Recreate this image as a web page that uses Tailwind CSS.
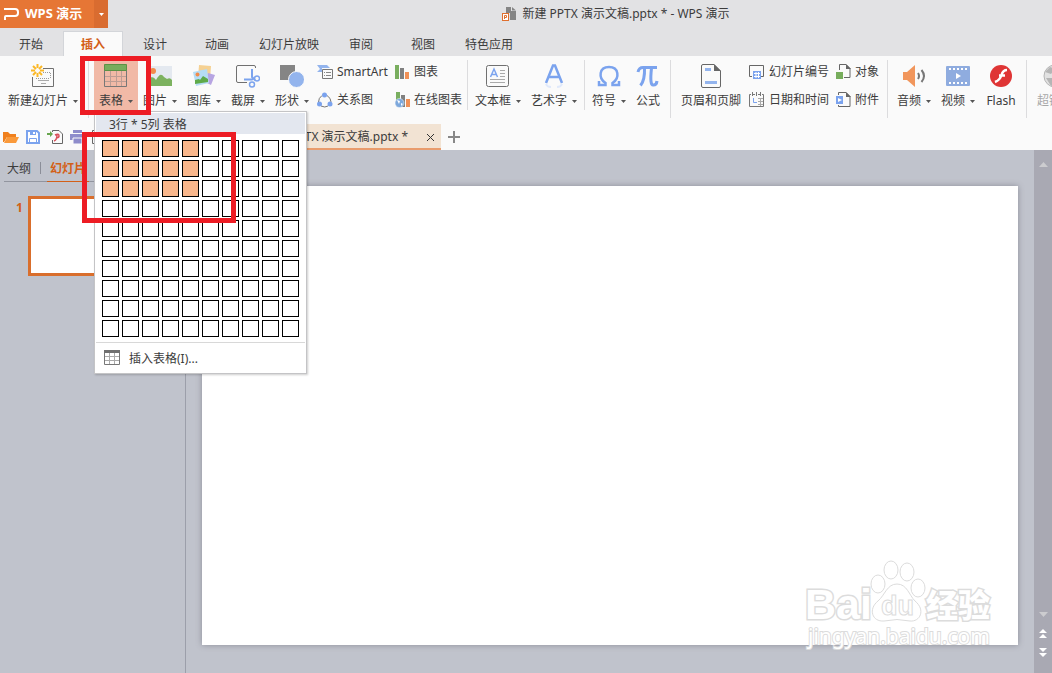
<!DOCTYPE html>
<html lang="zh-CN">
<head>
  <meta charset="UTF-8" />
  <meta name="viewport" content="width=device-width, initial-scale=1.0" />
  <title>新建 PPTX 演示文稿.pptx * - WPS 演示</title>
  <script src="https://cdn.jsdelivr.net/npm/@tailwindcss/browser@4"></script>
  <style>
    body {
      font-family: 'Noto Sans', 'Noto Sans CJK SC', sans-serif;
    }
  </style>
</head>
<body class="relative h-screen flex flex-col overflow-hidden bg-[#fafafa] text-xs text-[#3c3c3c]">

  <!-- Title bar -->
  <header class="flex h-7 shrink-0 bg-[#e2e2e4]">
    <button class="flex items-center gap-1.5 w-[94px] pl-1 bg-[#e67635] text-[13px] text-white font-bold whitespace-nowrap">
      <svg class="shrink-0" width="15" height="14" fill="none" stroke="#fff" stroke-width="2"><path d="M0 2h11q3 0 3 3v1q0 3-3 3H2q-1 0-1 1v3" /></svg>
      <span>WPS 演示</span>
    </button>
    <button class="flex items-center justify-center w-3.5 bg-[#d96c30]" aria-label="菜单">
      <svg width="5" height="3" fill="#fff"><path d="M0 0h5L2.500 3z" /></svg>
    </button>
    <div class="flex flex-1 items-center justify-center gap-1.5 pl-[72px]">
      <svg width="14" height="14"><path d="M4 0h5v4h5v9H8V6H4z" fill="#858585" /><path d="M10 0l4 3.500h-4z" fill="#858585" /><rect x=".5" y="6.500" width="6" height="7" fill="#fff" stroke="#e0702f" /><path d="M2.500 12V8.500h2v2h-2" fill="none" stroke="#e0702f" /></svg>
      <h1>新建 PPTX 演示文稿.pptx * - WPS 演示</h1>
    </div>
  </header>

  <!-- Ribbon tabs -->
  <nav class="flex h-7 shrink-0 items-end bg-[#e2e2e4] whitespace-nowrap *:h-[25px] *:pt-0.5">
    <button class="mx-0.5 px-[17px]">开始</button>
    <button class="mx-px px-[17px] border border-b-0 border-[#d3d5d9] bg-[#fafafa] font-bold text-[#d35f17]">插入</button>
    <button class="mx-0.5 px-[17px]">设计</button>
    <button class="mx-0.5 px-[17px]">动画</button>
    <button class="mx-0.5 px-[9px]">幻灯片放映</button>
    <button class="mx-0.5 px-[17px]">审阅</button>
    <button class="mx-0.5 px-[17px]">视图</button>
    <button class="mx-0.5 px-[9px]">特色应用</button>
  </nav>

  <!-- Ribbon -->
  <section class="flex h-[68px] shrink-0 items-start overflow-hidden pt-1 whitespace-nowrap *:shrink-0">
    <button class="flex flex-col items-center gap-[5px] w-[86px] pt-1">
      <svg width="24" height="24" fill="none"><path d="M12 4.500h10.500v18h-21V13" stroke="#707070" /><path d="M12 8.500h7M5 14.500h14M19.500 9v6" stroke="#999" stroke-dasharray="1 1" /><path d="M7 16.500h11M10 19.500h5" stroke="#aaa" /><path d="M6.500 0v4M6.500 9v4M0 6.500h4M9 6.500h4M2 2l3 3M11 2L8 5M2 11l3-3M11 11L8 8" stroke="#fbb827" stroke-width="2" /></svg>
      <span class="flex items-center gap-[5px]">新建幻灯片<svg width="5" height="3" fill="#555"><path d="M0 0h5L2.500 3z" /></svg></span>
    </button>
    <div class="mx-0.5 h-[58px] w-px bg-[#dcdcde]"></div>
    <div class="flex pl-[3px] *:w-11">
      <button class="flex flex-col items-center gap-[5px] h-[54px] pt-1 bg-[#f1b9a6]">
        <svg width="24" height="24" fill="none"><path d="M.5 6.500h22v16H.5z" stroke="#777" /><path d="M1 12.500h21M1 17.500h21M6.500 7v15M12.500 7v15M17.500 7v15" stroke="#bd9d94" /><path d="M.5.500h22v6H.5z" fill="#77ad5c" stroke="#5c9145" /></svg>
        <span class="flex items-center gap-[5px]">表格<svg width="5" height="3" fill="#555"><path d="M0 0h5L2.500 3z" /></svg></span>
      </button>
      <button class="flex flex-col items-center gap-[5px] pt-1">
        <svg width="24" height="24"><path d="M0 2h24v20H0z" fill="#e4e9f0" /><circle cx="5" cy="7" r="3" fill="#f28b4b" /><path d="M0 22v-7c4-3 6-2 8 1 3-5 5-7 8-3l3 2q3-2 5 1v6z" fill="#7cb25f" /></svg>
        <span class="flex items-center gap-[5px]">图片<svg width="5" height="3" fill="#555"><path d="M0 0h5L2.500 3z" /></svg></span>
      </button>
      <button class="flex flex-col items-center gap-[5px] pt-1">
        <svg width="24" height="24"><path d="M7 1l12 1-1 14L6 14z" fill="#f5d193" /><path d="M16 9l7 2-4 10-6-3z" fill="#b7a5e2" /><path d="M1 8l14-3 2 14-13 3z" fill="#b5dcf5" /><circle cx="5.500" cy="10.500" r="2" fill="#f28b4b" /><path d="M3 20v-4l4-1 1 1 3-4 5 3v3z" fill="#5faa4a" /></svg>
        <span class="flex items-center gap-[5px]">图库<svg width="5" height="3" fill="#555"><path d="M0 0h5L2.500 3z" /></svg></span>
      </button>
      <button class="flex flex-col items-center gap-[5px] pt-1">
        <svg width="24" height="24" fill="none"><path d="M19.500 4V3q0-1.500-1.500-1.500H2Q.5 1.500.5 3v14q0 1.500 1.500 1.500h9" stroke="#707070" /><path d="M16 5v8l3 3M8 15.500h8l2-2" stroke="#7ba3ee" stroke-width="2" /><circle cx="16" cy="20.500" r="2.500" stroke="#7ba3ee" stroke-width="1.500" /><circle cx="21" cy="14.500" r="2.500" stroke="#7ba3ee" stroke-width="1.500" /></svg>
        <span class="flex items-center gap-[5px]">截屏<svg width="5" height="3" fill="#555"><path d="M0 0h5L2.500 3z" /></svg></span>
      </button>
      <button class="flex flex-col items-center gap-[5px] pt-1">
        <svg width="24" height="24"><path d="M0 1h15v15H0z" fill="#858585" /><circle cx="16.500" cy="15.500" r="8" fill="#93b4ed" stroke="#fafafa" /></svg>
        <span class="flex items-center gap-[5px]">形状<svg width="5" height="3" fill="#555"><path d="M0 0h5L2.500 3z" /></svg></span>
      </button>
    </div>
    <div class="grid grid-cols-[78px_70px] pl-[3px] leading-4 gap-y-3 pt-1">
      <button class="flex items-center gap-1">
        <svg width="16" height="16" fill="none"><path d="M0 1h10l3 3H5v4H0l3-3z" fill="#93b4ed" /><path d="M5.500 5.500h10v9h-10z" fill="#fafafa" stroke="#777" /><path d="M7 8.500h1M9 8.500h5M7 11.500h1M9 11.500h5" stroke="#888" /></svg>SmartArt</button>
      <button class="flex items-center gap-1">
        <svg width="15" height="16"><path d="M0 1h4v14H0z" fill="#79ae5f" /><path d="M5 4h4v11H5z" fill="#808080" /><path d="M10 8h4v7h-4z" fill="#f09056" /></svg>图表</button>
      <button class="flex items-center gap-1">
        <svg width="16" height="16" fill="none"><path d="M5 3.500Q1.500 6 1.500 10M10 3.500q4 2.500 4 6.500M4 14q4 2 7 0" stroke="#777" /><circle cx="7.500" cy="3" r="2.500" fill="#7ba3ee" /><circle cx="2.500" cy="12" r="2.500" fill="#7ba3ee" /><circle cx="13" cy="12" r="2.500" fill="#7ba3ee" /></svg>关系图</button>
      <button class="flex items-center gap-1">
        <svg width="15" height="16"><path d="M1 0h4v8H1z" fill="#79ae5f" /><path d="M6 3h4v12H6z" fill="#808080" /><path d="M11 7h4v8h-4z" fill="#f09056" /><circle cx="4.500" cy="11" r="4.500" fill="#7da8dc" stroke="#fafafa" stroke-width=".5" /><path d="M2 8l3 1-1 3zM6 11l2 1-2 2z" fill="#fff" /></svg>在线图表</button>
    </div>
    <div class="mx-0.5 h-[50px] w-px bg-[#dcdcde]"></div>
    <button class="flex flex-col items-center gap-[5px] w-14 pt-1">
      <svg width="24" height="24" fill="none"><rect x=".5" y="1.500" width="22" height="21" rx="2" stroke="#707070" /><path d="M4.500 13L8 5l3.500 8M6 10.500h4" stroke="#7ba3ee" stroke-width="1.500" /><path d="M14 6.500h5M14 9.500h5M14 12.500h5M4 15.500h15M4 18.500h15" stroke="#aaa" /></svg>
      <span class="flex items-center gap-[5px]">文本框<svg width="5" height="3" fill="#555"><path d="M0 0h5L2.500 3z" /></svg></span>
    </button>
    <button class="flex flex-col items-center gap-[5px] w-14 pt-1">
      <svg width="24" height="24" fill="none"><path d="M4 19L11 1.500h2L20 19M7 13h10" stroke="#7ba3ee" stroke-width="2.500" /><path d="M4 20q1 3 5 3M20 20q-1 3-5 3" stroke="#e0e9fb" stroke-width="2" /></svg>
      <span class="flex items-center gap-[5px]">艺术字<svg width="5" height="3" fill="#555"><path d="M0 0h5L2.500 3z" /></svg></span>
    </button>
    <div class="mx-0.5 h-[50px] w-px bg-[#dcdcde]"></div>
    <button class="flex flex-col items-center gap-[5px] w-11 pt-1">
      <svg width="24" height="24" fill="none"><path d="M2 17v4h6.500v-2C1 14 2 3 12 3s11 11 3.500 16v2H22v-4" stroke="#7ba3ee" stroke-width="2.500" /></svg>
      <span class="flex items-center gap-[5px]">符号<svg width="5" height="3" fill="#555"><path d="M0 0h5L2.500 3z" /></svg></span>
    </button>
    <button class="mr-[3px] flex flex-col items-center gap-[5px] w-[34px] pt-1">
      <svg width="24" height="24" fill="none" stroke="#7ba3ee"><path d="M2 8Q3 3.500 7 3.500h14" stroke-width="3" /><path d="M8.500 4Q9 16 4.500 21.500M15.500 4q-2 18 2 17 3 0 3.500-4" stroke-width="3" /></svg>
      <span>公式</span>
    </button>
    <div class="mx-0.5 h-[58px] w-px bg-[#dcdcde]"></div>
    <button class="flex flex-col items-center gap-[5px] w-[76px] pt-1">
      <svg width="20" height="24" fill="none"><path d="M13 .5H2Q.5.500.5 2v20q0 1.500 1.500 1.500h16q1.500 0 1.500-1.500V7z" stroke="#666" /><path d="M13 0v7h7z" fill="#666" /><path d="M4 4h6v3H4zM4 17h12v3H4z" fill="#93b4ed" /></svg>
      <span>页眉和页脚</span>
    </button>
    <div class="grid grid-cols-[87px_49px] leading-4 gap-y-3 pt-1">
      <button class="flex items-center gap-1">
        <svg width="16" height="16" fill="none"><path d="M3 12.500H.5v-11h14v11H12" stroke="#666" /><path d="M4 7h8v8H4z" fill="#7ba3ee" /><path d="M7 8v6M9.500 8v6M5 9.500h6M5 12.500h6" stroke="#fff" /></svg>幻灯片编号</button>
      <button class="flex items-center gap-1">
        <svg width="15" height="16" fill="none"><path d="M3.500 6V.5H10l4 4v9H8" stroke="#666" /><path d="M10 0v5h5z" fill="#666" /><path d="M0 8h7v7H0z" fill="#77ad5c" /></svg>对象</button>
      <button class="flex items-center gap-1">
        <svg width="16" height="16" fill="none"><path d="M2 2.500H.5v12h14v-12H13M4 2.500h2M9 2.500h2M3.500 0v4M7.500 0v4M11.500 0v4" stroke="#777" /><path d="M9 6.500h5M9 9.500h5M9 12.500h5M11.500 6v8" stroke="#aaa" /><path d="M4.500 6v4.500H8" stroke="#7ba3ee" /></svg>日期和时间</button>
      <button class="flex items-center gap-1">
        <svg width="15" height="16" fill="none"><path d="M2.500 3V.5H10l4 4v10H2.500V13" stroke="#666" /><path d="M10 0v5h5z" fill="#666" /><path d="M0 4h7v8H0z" fill="#7ba3ee" /><path d="M2 6l4 2-4 2z" fill="#fff" /></svg>附件</button>
    </div>
    <div class="mx-0.5 h-[58px] w-px bg-[#dcdcde]"></div>
    <div class="flex px-0.5">
      <button class="flex flex-col items-center gap-[5px] w-11 pt-1">
        <svg width="24" height="24" fill="none"><path d="M1 8h4l8-7v22l-8-7H1z" fill="#f1965c" /><path d="M16 9q2 3 0 6M19.500 6q5 6 0 12" stroke="#777" stroke-width="2" /></svg>
        <span class="flex items-center gap-[5px]">音频<svg width="5" height="3" fill="#555"><path d="M0 0h5L2.500 3z" /></svg></span>
      </button>
      <button class="flex flex-col items-center gap-[5px] w-11 pt-1">
        <svg width="24" height="24" fill="none"><rect y="2" width="24" height="20" rx="1" fill="#8facdf" /><path d="M3 5h18M3 19h18" stroke="#fff" stroke-width="2" stroke-dasharray="2 2" /><path d="M10 9l5 3-5 3z" fill="#fff" /></svg>
        <span class="flex items-center gap-[5px]">视频<svg width="5" height="3" fill="#555"><path d="M0 0h5L2.500 3z" /></svg></span>
      </button>
      <button class="flex flex-col items-center gap-[5px] w-[42px] pt-1">
        <svg width="24" height="24" fill="none"><circle cx="12" cy="12" r="11" fill="#df3535" /><path d="M18 6q-4 0-5.500 5T6 18M10 11.500h6" stroke="#fff" stroke-width="2.500" /></svg>
        <span>Flash</span>
      </button>
    </div>
    <div class="mx-0.5 h-[58px] w-px bg-[#dcdcde]"></div>
    <button class="flex flex-col items-center gap-[5px] w-[52px] pt-1 text-[#a8a8a8]">
      <svg width="24" height="24"><circle cx="12" cy="12" r="11" fill="#e2e2e2" stroke="#b5b5b5" /><path d="M2 8l5-5 5 2-4 5zM3 14h7l3 5-5 3z" fill="#b5b5b5" /></svg>
      <span>超链接</span>
    </button>
  </section>

  <!-- Quick access and document tabs -->
  <section class="flex h-[26px] shrink-0 items-center">
    <div class="flex w-[236px] items-center gap-[7px] pl-[3px]">
      <button aria-label="打开"><svg class="block" width="16" height="16"><path d="M0 3h5l2 2h6v3H4l-3 5H0z" fill="#f0801d" /><path d="M4 8h12l-3 6H1z" fill="#fa9a3b" /></svg></button>
      <button aria-label="保存"><svg class="block" width="14" height="16" fill="none"><path d="M1 2h10l2 2v10H1z" fill="#fff" stroke="#7ba3ee" stroke-width="2" /><path d="M4 2h6v4H4z" fill="#7ba3ee" /><path d="M7 3h2v2H7z" fill="#fff" /><path d="M3.500 14v-4.500h7V14" stroke="#7ba3ee" /></svg></button>
      <button aria-label="输出为PDF"><svg class="block" width="16" height="16" fill="none"><path d="M5.500 3V1.500H12L15.500 5v9.500h-10V11" stroke="#666" /><path d="M0 4h3V2l3 3-3 3V6H0z" fill="#68a64e" /><path d="M8 6q4-2 4 1 0 2-3 2M10 6q0 5-3 6" stroke="#d9505a" stroke-width="1.500" /></svg></button>
      <button aria-label="打印"><svg class="block" width="15" height="16"><path d="M3 1h9v3H3zM0 5h15v6H0z" fill="#8e8ccb" /><path d="M3 9h9v6H3z" fill="#8e8ccb" stroke="#fafafa" /></svg></button>
      <button aria-label="打印预览"><svg class="block" width="15" height="16" fill="none"><path d="M.5 1.500h10v13H.5z" stroke="#666" /></svg></button>
    </div>
    <div class="flex h-full w-[205px] items-center justify-end gap-[18px] border-b-2 border-[#e99c6d] bg-[#f2e3d3] pr-1.5 pt-0.5 whitespace-nowrap">
      <span>新建 PPTX 演示文稿.pptx *</span>
      <button aria-label="关闭"><svg class="block" width="9" height="9" fill="none" stroke="#333"><path d="M1 1l7 7M8 1L1 8" /></svg></button>
    </div>
    <button class="px-[7px]" aria-label="新建"><svg width="12" height="12" stroke="#888" stroke-width="2"><path d="M6 0v12M0 6h12" /></svg></button>
  </section>

  <!-- Workspace -->
  <div class="flex min-h-0 flex-1 bg-[#c0c3cc]">
    <aside class="w-[186px] shrink-0 border-r border-[#9c9faa] pt-2">
      <div class="ml-1 flex h-6 items-start border-b border-[#92959f]">
        <button class="h-6 px-[3px] pb-0.5">大纲</button>
        <span class="mx-1.5 mt-1 h-3 w-px bg-[#8b8e98]"></span>
        <button class="h-6 border-b border-[#d35f17] px-[3px] pb-0.5 font-bold text-[#d35f17]">幻灯片</button>
      </div>
      <ol class="mt-3.5 pl-4">
        <li class="flex gap-[5px]">
          <span class="w-[7px] pt-1 font-bold text-[#d35f17]">1</span>
          <button class="h-20 w-[142px] border-3 border-[#d96e2c] bg-white" aria-label="幻灯片 1"></button>
        </li>
      </ol>
    </aside>
    <main class="flex flex-1 px-4 pt-9 pb-7">
      <div class="relative flex-1 bg-white shadow-[0_0_6px_#8c8e99]">
        <svg class="absolute right-0 -bottom-2 overflow-visible" width="214" height="96" fill="#fff" stroke="#dcdcdc">
          <g font-family="Liberation Sans" font-weight="bold">
            <text x="1" y="62" font-size="43" stroke-width="3" paint-order="stroke">Bai</text>
            <ellipse cx="74" cy="27" rx="7" ry="9" />
            <ellipse cx="87" cy="13" rx="7" ry="9" />
            <ellipse cx="103" cy="15" rx="7" ry="9" />
            <ellipse cx="114" cy="31" rx="7" ry="9" />
            <path d="M93 27c10 0 12 11 18 17 11 9 5 21-5 20q-13-3-26 0c-12 1-16-12-6-20 7-6 9-17 19-17z" />
            <text x="77" y="58" font-size="27">du</text>
          </g>
          <text x="122" y="60" font-family="Noto Sans CJK SC" font-weight="900" font-size="32" stroke-width="3" paint-order="stroke">经验</text>
          <text x="4" y="87" font-family="Noto Sans" font-size="21" stroke-width="2" paint-order="stroke">jingyan.baidu.com</text>
        </svg>
      </div>
    </main>
    <div class="flex w-[18px] shrink-0 flex-col items-center bg-[#a9a9b3] pt-3 pb-4">
      <button aria-label="向上滚动"><svg class="block" width="9" height="5" fill="#cccccf"><path d="M0 5h9L4.500 0z" /></svg></button>
      <button class="mt-auto" aria-label="向下滚动"><svg class="block" width="9" height="5" fill="#cccccf"><path d="M0 0h9L4.500 5z" /></svg></button>
      <button class="mt-3" aria-label="上一张"><svg class="block" width="8" height="9" fill="#fff"><path d="M0 4h8L4 0zM0 9h8L4 5z" /></svg></button>
      <button class="mt-2.5" aria-label="下一张"><svg class="block" width="8" height="9" fill="#fff"><path d="M0 0h8L4 4zM0 5h8L4 9z" /></svg></button>
    </div>
  </div>

  <!-- Table size menu -->
  <div class="absolute left-[94px] top-[111px] w-[213px] border border-[#c4c4c6] bg-white p-px shadow-[1px_1px_2px_#0003]">
    <div class="h-[21px] bg-[#e3e7ef] pl-[13px] leading-6">3行 * 5列 表格</div>
    <div id="sizeGrid" class="grid w-fit grid-cols-10 gap-[3px] px-1.5 pt-1.5 pb-[5px]"></div>
    <button class="flex h-[30px] w-full items-center gap-[9px] border-t border-[#d8d8d8] pl-2">
      <svg width="16" height="15" fill="none"><path d="M.5 2.500h15v12H.5z" stroke="#777" /><path d="M1 6.500h14M1 10.500h14M5.500 3v11M10.500 3v11" stroke="#aaa" /><path d="M0 0h16v3H0z" fill="#707070" /></svg>
      <span class="pt-0.5">插入表格(I)...</span>
    </button>
  </div>

  <!-- Highlight frames -->
  <div class="pointer-events-none absolute left-20 top-14 h-[59px] w-[71px] border-5 border-[#ed1c24]"></div>
  <div class="pointer-events-none absolute left-[82px] top-[132px] h-[91px] w-[154px] border-5 border-[#ed1c24]"></div>

  <script>
    const grid = document.getElementById('sizeGrid');
    for (let row = 1; row <= 10; row++) {
      for (let col = 1; col <= 10; col++) {
        const cell = document.createElement('button');
        const picked = row <= 3 && col <= 5;
        cell.className = picked ? 'size-[17px] border border-black bg-[#f9b78c]' : 'size-[17px] border border-black bg-white';
        cell.setAttribute('aria-label', row + '行 ' + col + '列');
        grid.appendChild(cell);
      }
    }
  </script>
</body>
</html>
